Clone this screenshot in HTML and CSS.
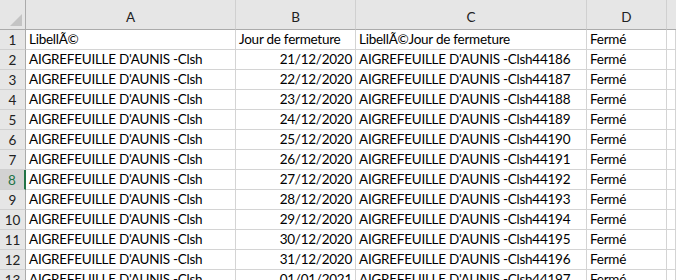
FILE: index.html
```html
<!DOCTYPE html>
<html>
<head>
<meta charset="utf-8">
<link rel="stylesheet" href="styles.css">
</head>
<body>
<div class="sheet">
  <div class="corner"><span class="tri"></span></div>
  <div class="colhead">A</div>
  <div class="colhead">B</div>
  <div class="colhead">C</div>
  <div class="colhead">D</div>
  <div class="colhead last"></div>

  <div class="rowhead">1</div>
  <div class="cell">LibellÃ©</div>
  <div class="cell">Jour de fermeture</div>
  <div class="cell">LibellÃ©Jour de fermeture</div>
  <div class="cell">Fermé</div>
  <div class="cell"></div>

  <div class="rowhead">2</div><div class="cell">AIGREFEUILLE D'AUNIS -Clsh</div><div class="cell num">21/12/2020</div><div class="cell">AIGREFEUILLE D'AUNIS -Clsh44186</div><div class="cell">Fermé</div><div class="cell"></div>
  <div class="rowhead">3</div><div class="cell">AIGREFEUILLE D'AUNIS -Clsh</div><div class="cell num">22/12/2020</div><div class="cell">AIGREFEUILLE D'AUNIS -Clsh44187</div><div class="cell">Fermé</div><div class="cell"></div>
  <div class="rowhead">4</div><div class="cell">AIGREFEUILLE D'AUNIS -Clsh</div><div class="cell num">23/12/2020</div><div class="cell">AIGREFEUILLE D'AUNIS -Clsh44188</div><div class="cell">Fermé</div><div class="cell"></div>
  <div class="rowhead">5</div><div class="cell">AIGREFEUILLE D'AUNIS -Clsh</div><div class="cell num">24/12/2020</div><div class="cell">AIGREFEUILLE D'AUNIS -Clsh44189</div><div class="cell">Fermé</div><div class="cell"></div>
  <div class="rowhead">6</div><div class="cell">AIGREFEUILLE D'AUNIS -Clsh</div><div class="cell num">25/12/2020</div><div class="cell">AIGREFEUILLE D'AUNIS -Clsh44190</div><div class="cell">Fermé</div><div class="cell"></div>
  <div class="rowhead">7</div><div class="cell">AIGREFEUILLE D'AUNIS -Clsh</div><div class="cell num">26/12/2020</div><div class="cell">AIGREFEUILLE D'AUNIS -Clsh44191</div><div class="cell">Fermé</div><div class="cell"></div>
  <div class="rowhead active">8</div><div class="cell">AIGREFEUILLE D'AUNIS -Clsh</div><div class="cell num">27/12/2020</div><div class="cell">AIGREFEUILLE D'AUNIS -Clsh44192</div><div class="cell">Fermé</div><div class="cell"></div>
  <div class="rowhead">9</div><div class="cell">AIGREFEUILLE D'AUNIS -Clsh</div><div class="cell num">28/12/2020</div><div class="cell">AIGREFEUILLE D'AUNIS -Clsh44193</div><div class="cell">Fermé</div><div class="cell"></div>
  <div class="rowhead">10</div><div class="cell">AIGREFEUILLE D'AUNIS -Clsh</div><div class="cell num">29/12/2020</div><div class="cell">AIGREFEUILLE D'AUNIS -Clsh44194</div><div class="cell">Fermé</div><div class="cell"></div>
  <div class="rowhead">11</div><div class="cell">AIGREFEUILLE D'AUNIS -Clsh</div><div class="cell num">30/12/2020</div><div class="cell">AIGREFEUILLE D'AUNIS -Clsh44195</div><div class="cell">Fermé</div><div class="cell"></div>
  <div class="rowhead">12</div><div class="cell">AIGREFEUILLE D'AUNIS -Clsh</div><div class="cell num">31/12/2020</div><div class="cell">AIGREFEUILLE D'AUNIS -Clsh44196</div><div class="cell">Fermé</div><div class="cell"></div>
  <div class="rowhead">13</div><div class="cell">AIGREFEUILLE D'AUNIS -Clsh</div><div class="cell num">01/01/2021</div><div class="cell">AIGREFEUILLE D'AUNIS -Clsh44197</div><div class="cell">Fermé</div><div class="cell"></div>
</div>
</body>
</html>
```
FILE: styles.css
```css
html, body {
  margin: 0;
  padding: 0;
  background: #ffffff;
  overflow: hidden;
}
.sheet {
  display: grid;
  grid-template-columns: 26px 210px 120px 231px 80px 1fr;
  grid-auto-rows: 20px;
  grid-template-rows: 30px;
  width: 676px;
  font-family: "Lato", "Liberation Sans", sans-serif;
  font-size: 13.5px;
  letter-spacing: -0.25px;
  color: #000;
}
.corner {
  position: relative;
  background: #e6e6e6;
  border-right: 1px solid #ababab;
  border-bottom: 1px solid #ababab;
}
.tri {
  position: absolute;
  right: 3px;
  bottom: 3px;
  width: 0;
  height: 0;
  border-left: 12px solid transparent;
  border-bottom: 12px solid #c4c4c4;
}
.colhead {
  background: #e6e6e6;
  border-right: 1px solid #d0d0d0;
  border-bottom: 1px solid #ababab;
  display: flex;
  align-items: flex-end;
  justify-content: center;
  padding-bottom: 4px;
  color: #222;
  box-sizing: border-box;
  letter-spacing: 0;
}
.colhead.last { border-right: none; }
.rowhead {
  background: #e6e6e6;
  border-right: 1px solid #ababab;
  border-bottom: 1px solid #d0d0d0;
  display: flex;
  align-items: center;
  justify-content: center;
  color: #222;
  letter-spacing: 0;
}
.rowhead.active {
  background: #d2d2d2;
  border-right: 2px solid #217346;
  color: #217346;
}
.cell {
  border-right: 1px solid #d4d4d4;
  border-bottom: 1px solid #d4d4d4;
  display: flex;
  align-items: flex-end;
  padding: 0 3px 2px 3px;
  white-space: nowrap;
  overflow: hidden;
  min-width: 0;
}
.cell.num { justify-content: flex-end; }
```
